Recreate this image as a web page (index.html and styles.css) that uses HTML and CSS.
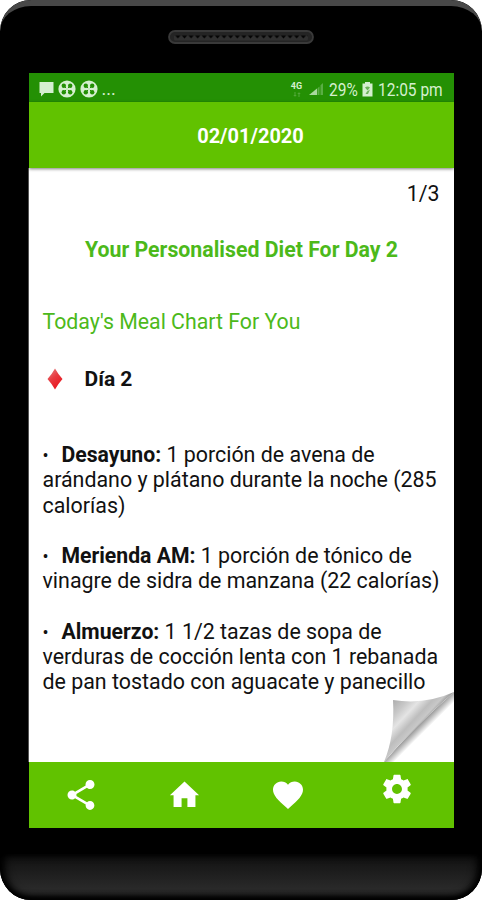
FILE: index.html
```
<!DOCTYPE html>
<html lang="es">
<head>
  <meta charset="utf-8">
  <title>Diet Plan</title>
  <link rel="stylesheet" href="styles.css">
</head>

<body>

<div class="phone">
  <div class="phone-top">
    <svg class="speaker" width="146" height="14" viewBox="0 0 146 14">
      <defs>
        <pattern id="grille" width="6.6" height="14" patternUnits="userSpaceOnUse">
          <path d="M0 5.500 3.300 8.500 6.600 5.500V10.500H0z" fill="#303030"/>
          <path d="M.8 5.500h5L3.300 8.500z" fill="#050505"/>
        </pattern>
      </defs>
      <rect x="1" y="1" width="144" height="12" rx="6" fill="#242424" stroke="#393939" stroke-width="1.800"/>
      <rect x="6" y="2" width="134" height="10" rx="4" fill="url(#grille)"/>
    </svg>
  </div>

  <div class="screen">
    <div class="status">
      <div class="status-left">
        <svg width="15" height="16" viewBox="0 0 15 16"><path d="M.5 1h14v11H5.500L2 15.500V12H.5z" fill="#d5efcf"/></svg>
        <svg width="18" height="18" viewBox="0 0 18 18"><use href="#clover"/></svg>
        <svg width="18" height="18" viewBox="0 0 18 18">
          <g id="clover">
            <circle cx="9" cy="9" r="8.600" fill="#d5efcf"/>
            <g fill="#249004"><circle cx="5.800" cy="5.800" r="2.200"/><circle cx="12.200" cy="5.800" r="2.200"/><circle cx="5.800" cy="12.200" r="2.200"/><circle cx="12.200" cy="12.200" r="2.200"/></g>
            <path d="M5.500 5.500l7 7m0-7l-7 7" stroke="#249004" stroke-width="1"/>
            <path d="M9 1v16M1 9h16" stroke="#d5efcf" stroke-width="1.500"/>
          </g>
        </svg>
        <span class="more">...</span>
      </div>
      <div class="status-right">
        <div class="network">
          <span>4G</span>
          <svg width="8" height="5" viewBox="0 0 8 5"><path d="M2 0v4M.8 3 2 4.300 3.200 3M6 5V1M4.800 2 6 .7 7.200 2" fill="none" stroke="#5fb049" stroke-width=".8"/></svg>
        </div>
        <svg class="signal" width="15" height="14" viewBox="0 0 15 14">
          <path d="M0 13 8 6.500V13z" fill="#a9d99d"/>
          <path d="M8.500 13h2V4.500l-2 1.700zM11.500 13H14V1l-2.500 2.200z" fill="#5aae45"/>
        </svg>
        <span class="percent">29%</span>
        <svg class="battery" width="11" height="15" viewBox="0 0 11 15">
          <path d="M3 0h5v1.500h2.500v13H.5v-13H3z" fill="#d5efcf"/>
          <path d="M3 5.500q2.500-2 5 0L5.500 8.500zM5 9.500l3-2-2 4.500H3.500z" fill="#6cb258"/>
        </svg>
        <span class="time">12:05 pm</span>
      </div>
    </div>

    <div class="header"><span>02/01/2020</span></div>

    <div class="content">
      <div class="counter">1/3</div>
      <h1>Your Personalised Diet For Day 2</h1>
      <h2>Today's Meal Chart For You</h2>
      <div class="day">
        <svg width="16" height="22" viewBox="0 0 16 22">
          <defs>
            <linearGradient id="ruby" x1="0" y1="0" x2=".6" y2="1">
              <stop offset="0" stop-color="#e58a8a"/>
              <stop offset=".5" stop-color="#e83a40"/>
              <stop offset="1" stop-color="#e9161e"/>
            </linearGradient>
          </defs>
          <path d="M8 .5Q11 6 15.500 11 11 16 8 21.500 5 16 .5 11 5 6 8 .5z" fill="url(#ruby)"/>
        </svg>
        <b>Día 2</b>
      </div>
      <div class="meals">
        <p><i class="dot">•</i><b>Desayuno:</b> 1 porción de avena de<br>arándano y plátano durante la noche (285<br>calorías)</p>
        <p><i class="dot">•</i><b>Merienda AM:</b> 1 porción de tónico de<br>vinagre de sidra de manzana (22 calorías)</p>
        <p><i class="dot">•</i><b>Almuerzo:</b> 1 1/2 tazas de sopa de<br>verduras de cocción lenta con 1 rebanada<br>de pan tostado con aguacate y panecillo</p>
      </div>
      <!-- page curl -->
      <svg class="curl" width="71" height="71" viewBox="0 0 71 71">
        <defs>
          <linearGradient id="fold" gradientUnits="userSpaceOnUse" x1="8" y1="10" x2="38" y2="38">
            <stop offset="0" stop-color="#ababab"/>
            <stop offset=".3" stop-color="#c9c9c9"/>
            <stop offset=".5" stop-color="#e4e4e4"/>
            <stop offset=".72" stop-color="#bdbdbd"/>
            <stop offset=".86" stop-color="#c8c8c8"/>
            <stop offset="1" stop-color="#8a8a8a"/>
          </linearGradient>
          <linearGradient id="shade" gradientUnits="userSpaceOnUse" x1="34" y1="34" x2="41" y2="41">
            <stop offset="0" stop-color="#888"/>
            <stop offset="1" stop-color="#fff"/>
          </linearGradient>
        </defs>
        <path d="M1 71Q31 36 71 1V13Q42 38 11 71z" fill="url(#shade)"/>
        <path d="M10 9Q42 14 71 1 49 20 33 37 13 56 1 71 12 45 10 9z" fill="url(#fold)"/>
      </svg>
    </div>

    <div class="nav">
      <svg class="share" viewBox="0 0 24 24"><path d="M18 16.080c-.76 0-1.440.3-1.960.77L8.910 12.700c.05-.23.09-.46.09-.7s-.04-.47-.09-.7l7.050-4.110c.54.5 1.250.81 2.040.81 1.660 0 3-1.340 3-3s-1.340-3-3-3-3 1.340-3 3c0 .24.04.47.09.7L8.040 9.810C7.500 9.310 6.790 9 6 9c-1.660 0-3 1.340-3 3s1.340 3 3 3c.79 0 1.500-.31 2.040-.81l7.120 4.160c-.05.21-.08.43-.08.65 0 1.610 1.310 2.920 2.920 2.920s2.920-1.310 2.920-2.920-1.310-2.920-2.920-2.920z"/></svg>
      <svg class="home" viewBox="0 0 24 24"><path d="M10 20.500v-6h4v6h5.500v-8H22L12 3 2 12.500h2.500v8z"/></svg>
      <svg class="heart" viewBox="0 0 24 24"><path d="M12 21.350l-1.450-1.320C5.400 15.360 2 12.280 2 8.500 2 5.420 4.420 3 7.500 3c1.740 0 3.410.81 4.500 2.090C13.090 3.810 14.760 3 16.500 3 19.580 3 22 5.420 22 8.500c0 3.780-3.400 6.860-8.550 11.540L12 21.350z"/></svg>
      <svg class="gear" viewBox="0 0 24 24"><path d="M19.430 12.980c.04-.32.07-.64.07-.98s-.03-.66-.07-.98l2.110-1.650c.19-.15.24-.42.12-.64l-2-3.460c-.12-.22-.39-.3-.61-.22l-2.490 1c-.52-.4-1.080-.73-1.690-.98l-.38-2.650C14.460 2.180 14.250 2 14 2h-4c-.25 0-.46.18-.49.42l-.38 2.650c-.61.25-1.170.59-1.690.98l-2.490-1c-.23-.09-.49 0-.61.22l-2 3.460c-.13.22-.07.49.12.64l2.110 1.650c-.04.32-.07.65-.07.98s.03.66.07.98l-2.110 1.650c-.19.15-.24.42-.12.64l2 3.460c.12.22.39.3.61.22l2.490-1c.52.4 1.080.73 1.690.98l.38 2.650c.03.24.24.42.49.42h4c.25 0 .46-.18.49-.42l.38-2.650c.61-.25 1.170-.59 1.690-.98l2.490 1c.23.09.49 0 .61-.22l2-3.460c.12-.22.07-.49-.12-.64l-2.110-1.650zM12 15.500c-1.930 0-3.500-1.570-3.500-3.500s1.570-3.500 3.500-3.500 3.500 1.570 3.500 3.500-1.570 3.500-3.500 3.500z"/></svg>
    </div>
  </div>

  <div class="phone-bottom"></div>
</div>

</body>
</html>
```
FILE: styles.css
```
* {
  box-sizing: border-box;
}

body {
  font-family: Roboto, sans-serif;
  margin: 0;
  background: #fff;
  color: #111;
}

svg {
  display: block;
  flex: none;
}

.phone {
  display: flex;
  flex-direction: column;
  align-items: center;
  width: 482px;
  height: 900px;
  background: #000;
  border-radius: 31px;
  overflow: hidden;
}

.phone-top {
  display: flex;
  justify-content: center;
  width: 100%;
  height: 73px;
  padding-top: 30px;
  border-top: 6px solid #484848;
  border-radius: 31px 31px 0 0;
  padding-top: 24px;
}

.screen {
  display: flex;
  flex-direction: column;
  width: 425px;
  height: 755px;
  background: #fff;
}

.status {
  display: flex;
  justify-content: space-between;
  height: 29px;
  padding: 0 12px 0 10px;
  background: #249004;
  color: #d5efcf;
}

.status-left,
.status-right {
  display: flex;
  align-items: center;
  height: 32px;
}

.status-left {
  gap: 4px;
}

.more {
  font-size: 18px;
  line-height: 20px;
}

.status-right {
  font-size: 18px;
}

.network {
  display: flex;
  flex-direction: column;
  align-items: center;
  gap: 2px;
  width: 12px;
  margin-right: 6px;
  font-size: 9px;
  line-height: 8px;
  font-weight: bold;
}

.signal {
  margin-right: 5px;
}

.percent {
  width: 29px;
  transform: scaleX(.86);
  transform-origin: left;
}

.battery {
  margin: 0 5px 0 4px;
}

.time {
  width: 64px;
  white-space: nowrap;
  transform: scaleX(.86);
  transform-origin: left;
}

.header {
  display: flex;
  align-items: center;
  justify-content: center;
  position: relative;
  z-index: 1;
  height: 66px;
  padding: 2px 0 0 19px;
  background: #61c200;
  box-shadow: 0 1px 3px rgba(0, 0, 0, .5);
  color: #fff;
  font-size: 20px;
  font-weight: bold;
}

.content {
  position: relative;
  height: 594px;
  padding: 0 14px;
  box-shadow: -1px 0 #555;
  font-size: 21.3px;
  line-height: 25.2px;
}

.counter {
  padding-top: 13px;
  text-align: right;
}

h1,
h2 {
  margin: 0;
  color: #4cb91a;
  font-size: 21.3px;
  line-height: 26px;
}

h1 {
  margin-top: 31px;
  padding-left: 1px;
  text-align: center;
}

h2 {
  margin-top: 46px;
  font-weight: normal;
}

.day {
  display: flex;
  align-items: center;
  gap: 22px;
  height: 26px;
  margin-top: 31px;
  padding-left: 4px;
}

.day b {
  font-size: 21px;
}

.meals {
  height: 250px;
  margin-top: 50px;
  font-size: 21.4px;
  white-space: nowrap;
}

.meals p {
  margin: 0 0 25.2px;
}

.dot {
  display: inline-block;
  width: 19px;
  font-size: 18px;
  font-style: normal;
  line-height: 18px;
}

.meals b {
  font-size: 21.2px;
}

.curl {
  position: absolute;
  right: 0;
  bottom: 0;
}

.nav {
  display: grid;
  grid-template-columns: 104px 103px 104px 114px;
  justify-items: center;
  height: 66px;
  background: #61c200;
}

.nav svg {
  width: 36px;
  height: 36px;
  margin-top: 15px;
  fill: #fff;
}

.nav .home {
  width: 35px;
  height: 35px;
}

.nav .gear {
  width: 34px;
  height: 34px;
  margin-top: 10px;
}

.phone-bottom {
  width: 100%;
  height: 46px;
  margin-top: 26px;
  border-radius: 0 0 31px 31px;
  background: linear-gradient(#101010, #292929 75%, #202020);
  box-shadow: inset 0 -3px 4px #000, inset 5px 0 8px #000, inset -5px 0 8px #000;
}
```
